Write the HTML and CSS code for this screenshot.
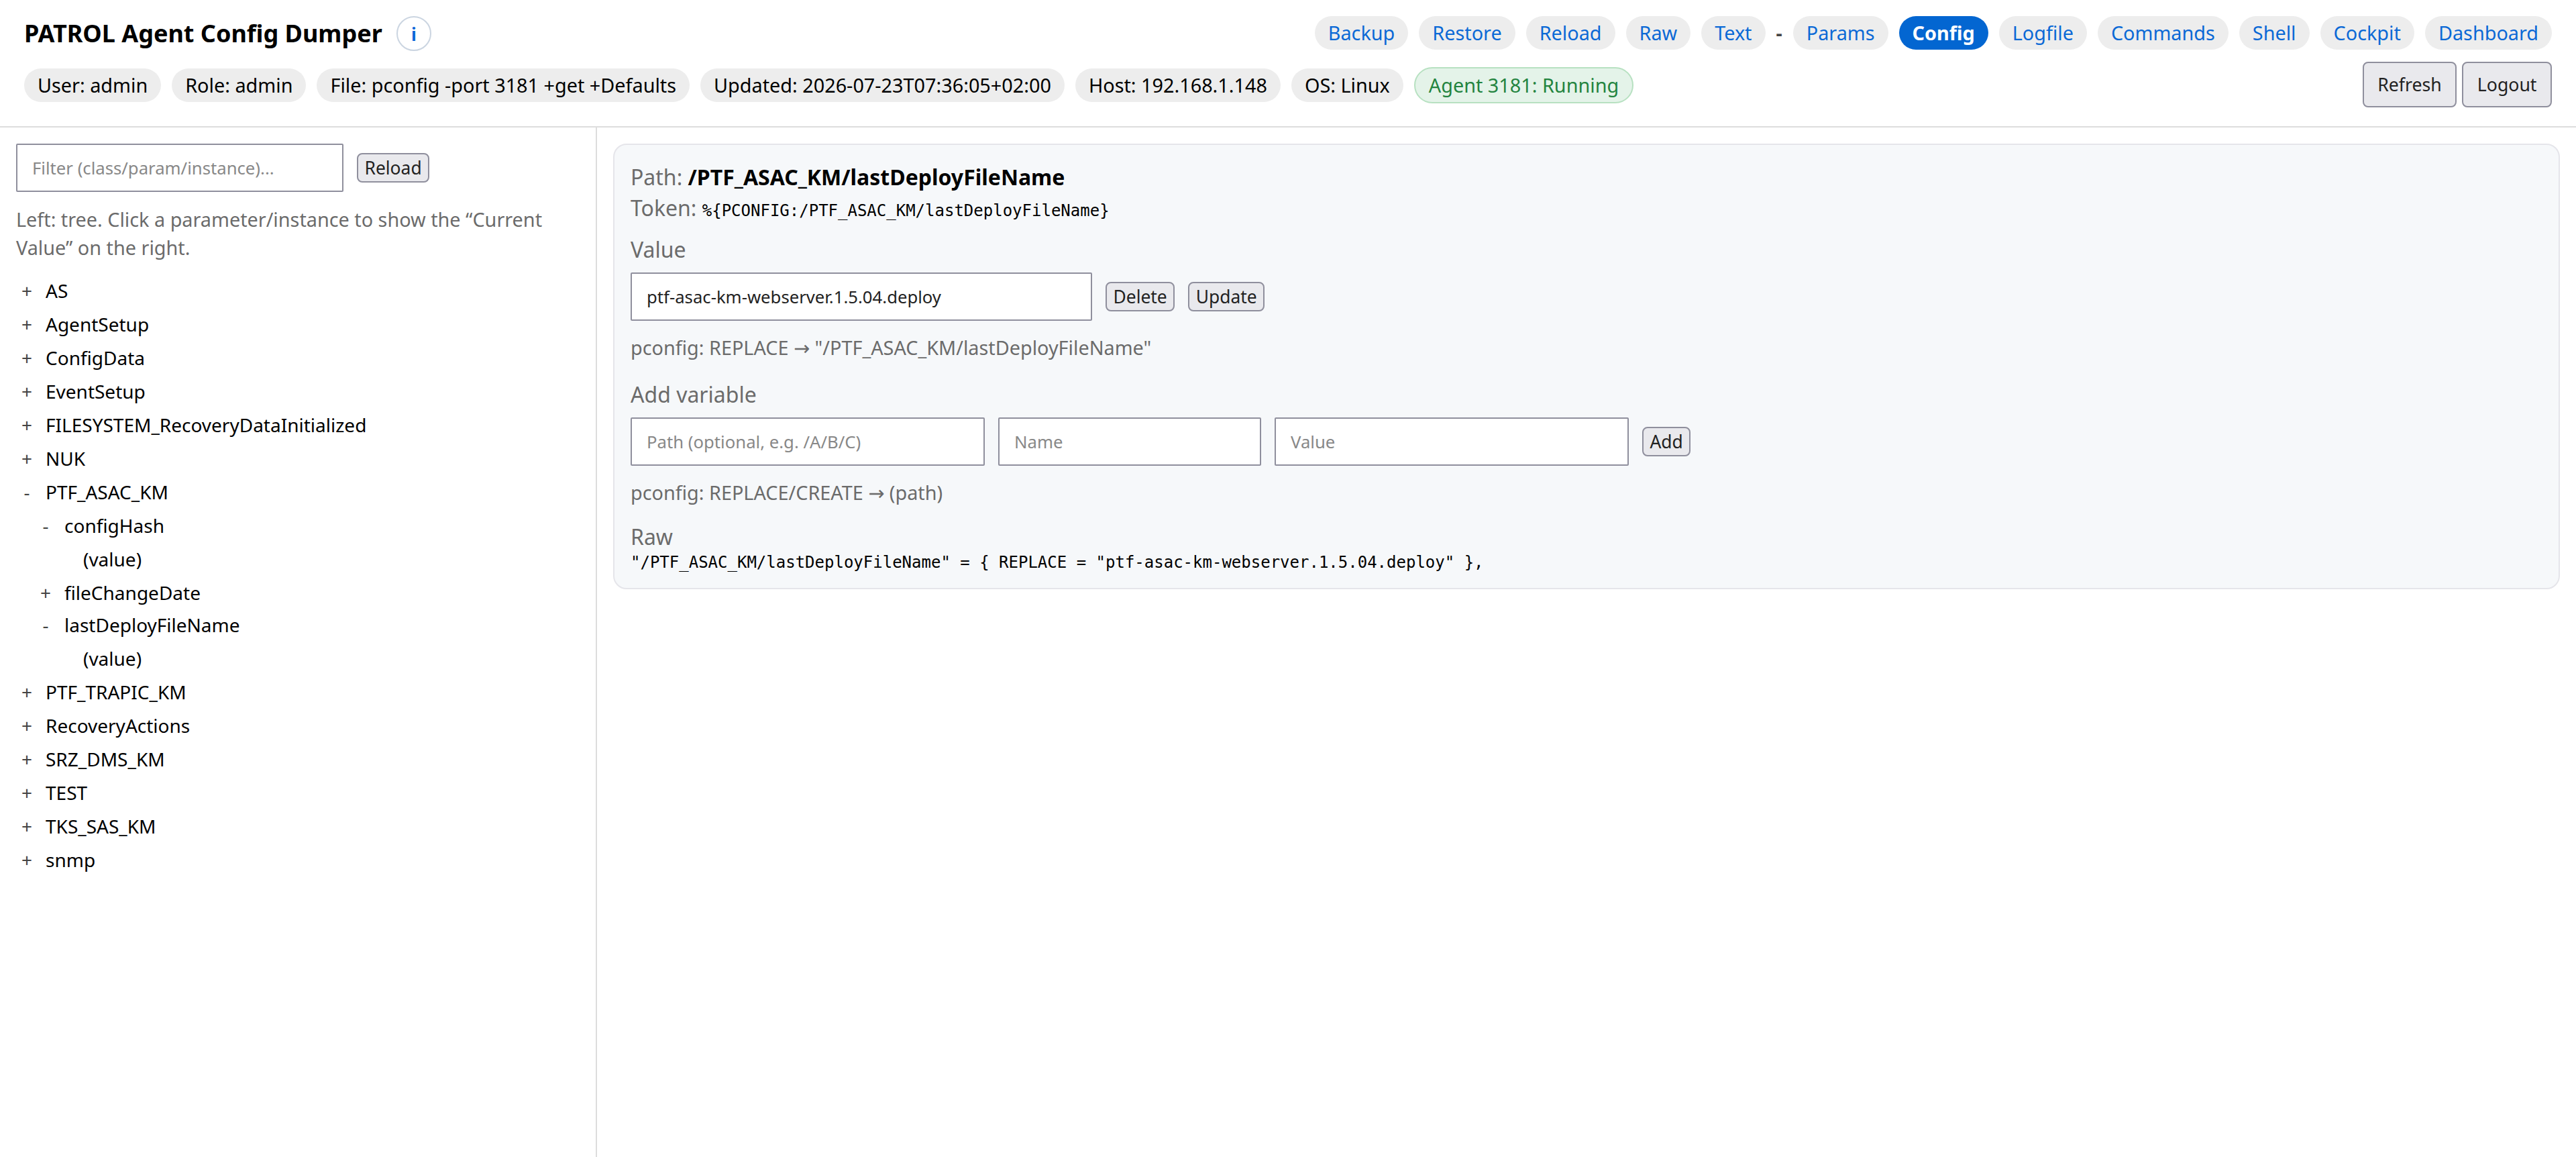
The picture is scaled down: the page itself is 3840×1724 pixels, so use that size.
FILE: index.html
```
<!DOCTYPE html>
<html lang="en">
<head>
    <meta charset="UTF-8">
    <meta name="viewport" content="width=device-width, initial-scale=1.0">
    <title>PATROL Agent Config Dumper</title>
    <link rel="stylesheet" href="styles.css">
</head>
<body>
    <header>
        <div class="row top">
            <div class="brand">
                <h1>PATROL Agent Config Dumper</h1>
                <a class="info" href="#" title="Info">i</a>
            </div>
            <nav>
                <a class="pill" href="#">Backup</a>
                <a class="pill" href="#">Restore</a>
                <a class="pill" href="#">Reload</a>
                <a class="pill" href="#">Raw</a>
                <a class="pill" href="#">Text</a>
                <span class="sep">-</span>
                <a class="pill" href="#">Params</a>
                <a class="pill active" href="#">Config</a>
                <a class="pill" href="#">Logfile</a>
                <a class="pill" href="#">Commands</a>
                <a class="pill" href="#">Shell</a>
                <a class="pill" href="#">Cockpit</a>
                <a class="pill" href="#">Dashboard</a>
            </nav>
        </div>
        <div class="row">
            <div class="meta">
                <span class="pill">User: admin</span>
                <span class="pill">Role: admin</span>
                <span class="pill">File: pconfig -port 3181 +get +Defaults</span>
                <span class="pill">Updated: 2026-07-23T07:36:05+02:00</span>
                <span class="pill">Host: 192.168.1.148</span>
                <span class="pill">OS: Linux</span>
                <span class="pill ok">Agent 3181: Running</span>
            </div>
            <div class="actions">
                <button class="big">Refresh</button>
                <button class="big">Logout</button>
            </div>
        </div>
    </header>

    <main>
        <aside>
            <div class="form-row">
                <input id="filter" class="w-filter" type="text" placeholder="Filter (class/param/instance)...">
                <button>Reload</button>
            </div>
            <p class="hint">Left: tree. Click a parameter/instance to show the “Current Value” on the right.</p>

            <div class="tree">
                <div class="node"><span class="tw">+</span>AS</div>
                <div class="node"><span class="tw">+</span>AgentSetup</div>
                <div class="node"><span class="tw">+</span>ConfigData</div>
                <div class="node"><span class="tw">+</span>EventSetup</div>
                <div class="node"><span class="tw">+</span>FILESYSTEM_RecoveryDataInitialized</div>
                <div class="node"><span class="tw">+</span>NUK</div>
                <div class="node"><span class="tw">-</span>PTF_ASAC_KM</div>
                <div class="children">
                    <div class="node"><span class="tw">-</span>configHash</div>
                    <div class="children">
                        <div class="node"><span class="tw"></span>(value)</div>
                    </div>
                    <div class="node"><span class="tw">+</span>fileChangeDate</div>
                    <div class="node current"><span class="tw">-</span>lastDeployFileName</div>
                    <div class="children">
                        <div class="node"><span class="tw"></span>(value)</div>
                    </div>
                </div>
                <div class="node"><span class="tw">+</span>PTF_TRAPIC_KM</div>
                <div class="node"><span class="tw">+</span>RecoveryActions</div>
                <div class="node"><span class="tw">+</span>SRZ_DMS_KM</div>
                <div class="node"><span class="tw">+</span>TEST</div>
                <div class="node"><span class="tw">+</span>TKS_SAS_KM</div>
                <div class="node"><span class="tw">+</span>snmp</div>
            </div>
        </aside>

        <section class="content">
            <div class="card">
                <div class="line"><span class="muted">Path:</span> <b>/PTF_ASAC_KM/lastDeployFileName</b></div>
                <div class="line"><span class="muted">Token:</span> <code>%{PCONFIG:/PTF_ASAC_KM/lastDeployFileName}</code></div>

                <div class="label muted">Value</div>
                <div class="form-row">
                    <input class="w-value" type="text" value="ptf-asac-km-webserver.1.5.04.deploy">
                    <button>Delete</button>
                    <button>Update</button>
                </div>
                <div class="note muted">pconfig: REPLACE <span class="arrow">→</span> "/PTF_ASAC_KM/lastDeployFileName"</div>

                <div class="label muted">Add variable</div>
                <div class="form-row">
                    <input class="w-path" type="text" placeholder="Path (optional, e.g. /A/B/C)">
                    <input class="w-name" type="text" placeholder="Name">
                    <input class="w-path" type="text" placeholder="Value">
                    <button>Add</button>
                </div>
                <div class="note muted">pconfig: REPLACE/CREATE <span class="arrow">→</span> (path)</div>

                <div class="label raw muted">Raw</div>
                <pre>"/PTF_ASAC_KM/lastDeployFileName" = { REPLACE = "ptf-asac-km-webserver.1.5.04.deploy" },</pre>
            </div>
        </section>
    </main>
</body>
</html>
```
FILE: styles.css
```
* {
    box-sizing: border-box;
}

body {
    margin: 0;
    height: 100vh;
    display: flex;
    flex-direction: column;
    font-family: "Noto Sans", sans-serif;
    font-size: 32px;
    line-height: 44px;
    color: #000;
    background: #fff;
    overflow: hidden;
}

header {
    height: 190px;
    padding: 24px 36px 0;
    border-bottom: 2px solid #ddd;
    flex: none;
}

.row {
    display: flex;
    align-items: center;
    justify-content: space-between;
}

.top {
    align-items: flex-start;
    margin-bottom: 16px;
}

.brand {
    display: flex;
    align-items: center;
    gap: 21px;
}

h1 {
    margin: 0;
    font-size: 36px;
    line-height: 52px;
    font-weight: 700;
}

.info {
    width: 52px;
    height: 52px;
    border: 2px solid #cbd5e1;
    border-radius: 50%;
    font-size: 26px;
    line-height: 50px;
    font-weight: 700;
    text-align: center;
    text-decoration: none;
    color: #0b66d8;
}

nav,
.meta {
    display: flex;
    align-items: center;
    gap: 16px;
}

.meta {
    margin-top: 2px;
}

.pill {
    padding: 4px 20px;
    border-radius: 999px;
    background: #ededed;
    font-size: 28.8px;
    line-height: 42px;
    text-decoration: none;
    white-space: nowrap;
}

nav .pill {
    color: #0b69d6;
}

nav .pill.active {
    background: #0366d1;
    color: #fff;
    font-weight: 700;
}

.sep {
    font-size: 28.8px;
    font-weight: 700;
    color: #444;
}

.pill.ok {
    border: 2px solid #b7e1c1;
    background: #e4f3e9;
    color: #23843f;
}

.actions {
    display: flex;
    gap: 8px;
}

button {
    height: 44px;
    padding: 0 9.5px;
    border: 2px solid #8f8f9d;
    border-radius: 8px;
    background: #e9e9ed;
    font-family: inherit;
    font-size: 26.4px;
    line-height: 36px;
    color: #222;
}

button.big {
    height: 68px;
    padding: 0 20.5px;
    font-size: 26.67px;
}

input {
    height: 72px;
    padding: 0 22px;
    border: 2px solid #8f8f9d;
    border-radius: 2px;
    background: #fff;
    font-family: inherit;
    font-size: 25.7px;
    color: #222;
}

input::placeholder {
    color: #888;
}

.w-filter {
    width: 488px;
}

.w-value {
    width: 688px;
}

.w-path {
    width: 528px;
}

.w-name {
    width: 392px;
}

.form-row {
    display: flex;
    align-items: center;
    gap: 20px;
}

main {
    flex: 1;
    display: flex;
}

aside {
    width: 890px;
    padding: 24px;
    border-right: 2px solid #ddd;
    flex: none;
}

.hint {
    margin: 20px 0 18px;
    font-size: 28.8px;
    line-height: 42px;
    color: #6b6b6b;
}

.node {
    display: flex;
    align-items: center;
    height: 50px;
    font-size: 28px;
}

.node.current {
    margin-top: -2px;
}

.tw {
    width: 32px;
    margin-right: 12px;
    text-align: center;
    color: #444;
}

.children {
    padding-left: 28px;
}

.content {
    flex: 1;
    padding: 24px;
}

.card {
    padding: 26px 24px 24px;
    height: 664px;
    border: 2px solid #e5e5ea;
    border-radius: 20px;
    background: #f6f8fa;
}

.muted {
    color: #6b6b6b;
}

.line {
    height: 46px;
}

code,
pre {
    margin: 0;
    font-family: "DejaVu Sans Mono", monospace;
    font-size: 24px;
}

pre {
    line-height: 28px;
}

.label {
    margin: 16px 0 12px;
}

.note {
    margin-top: 18px;
    padding-bottom: 10px;
    font-size: 28.8px;
    line-height: 44px;
}

.arrow {
    font-family: "DejaVu Sans", sans-serif;
    line-height: 1;
}

.label.raw {
    margin: 12px 0 2px;
}
```
